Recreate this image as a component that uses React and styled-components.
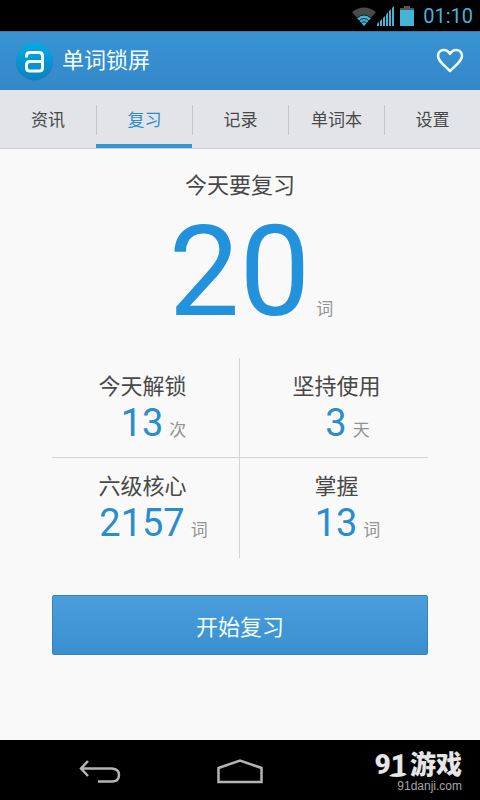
import React, { useState } from 'react';
import styled, { createGlobalStyle, ThemeProvider } from 'styled-components';

const theme = {
  blue: '#2192db',
  statBlue: '#2a8dcb',
  holo: '#45b3d8',
  text: '#484848',
  muted: '#929292',
  line: '#d3d3d3',
};

const tabs = ['资讯', '复习', '记录', '单词本', '设置'];

const stats = [
  { label: '今天解锁', value: 13, unit: '次' },
  { label: '坚持使用', value: 3, unit: '天' },
  { label: '六级核心', value: 2157, unit: '词' },
  { label: '掌握', value: 13, unit: '词' },
];

const GlobalStyle = createGlobalStyle`
  * {
    box-sizing: border-box;
  }

  body {
    margin: 0;
    background: #f9f9f9;
    font-family: Roboto, 'Noto Sans CJK SC', sans-serif;
  }

  button {
    font-family: inherit;
    cursor: pointer;
  }
`;

const Screen = styled.div`
  display: flex;
  flex-direction: column;
  min-height: 100vh;
  color: ${props => props.theme.text};
`;

const StatusBar = styled.div`
  display: flex;
  justify-content: flex-end;
  align-items: center;
  height: 31px;
  padding: 0 7px;
  background: #000;
  color: ${props => props.theme.holo};
`;

const Clock = styled.time`
  margin-left: 8px;
  font-size: 20px;
  line-height: 32px;
`;

const Header = styled.header`
  display: flex;
  align-items: center;
  height: 59px;
  padding: 0 16px;
  border-top: 1px solid #3b79a8;
  background: linear-gradient(#3a93d4, #3388c8);
  color: #f2ffff;
`;

const Title = styled.h1`
  flex: 1;
  margin: 0 0 0 9px;
  font-size: 22px;
  font-weight: 400;
  line-height: 32px;
`;

const IconButton = styled.button`
  display: flex;
  padding: 0;
  border: 0;
  background: none;
  color: inherit;
`;

const TabBar = styled.nav`
  display: flex;
  height: 59px;
  border-bottom: 1px solid #cdcfd2;
  background: #e2e4e8;
`;

const Tab = styled.button`
  display: flex;
  flex: 1;
  align-items: center;
  padding: 6px 0 0;
  border: 0;
  border-bottom: 4px solid ${props => (props.$active ? '#3796d2' : 'transparent')};
  background: none;
  color: ${props => (props.$active ? props.theme.statBlue : props.theme.text)};
  font-size: 17px;

  span {
    flex: 1;
    line-height: 30px;
  }

  &:not(:first-child) span {
    border-left: 1px solid #c4c6c9;
  }
`;

const Main = styled.main`
  display: flex;
  flex: 1;
  flex-direction: column;
  padding: 21px 52px 0;
`;

const Heading = styled.h2`
  margin: 0;
  font-size: 22px;
  font-weight: 400;
  line-height: 32px;
  text-align: center;
`;

const Total = styled.p`
  margin: 0;
  padding-left: 22px;
  color: ${props => props.theme.blue};
  font-size: 126px;
  line-height: 140px;
  text-align: center;
`;

const Unit = styled.span`
  margin-left: 6px;
  color: ${props => props.theme.muted};
  font-size: 17px;
  line-height: 20px;
`;

const Stats = styled.section`
  display: grid;
  grid-template-columns: 1fr 1fr;
  margin-top: 16px;
`;

const Stat = styled.div`
  height: 100px;
  padding: 13px 0 0 5px;
  text-align: center;

  &:nth-child(odd) {
    padding: 13px 6px 0 0;
    border-right: 1px solid ${props => props.theme.line};
  }

  &:nth-child(-n + 2) {
    border-bottom: 1px solid ${props => props.theme.line};
  }
`;

const StatLabel = styled.div`
  font-size: 22px;
  line-height: 32px;
`;

const StatValue = styled.div`
  padding-left: 22px;
  color: ${props => props.theme.statBlue};
  font-size: 38px;
  line-height: 40px;
`;

const StartButton = styled.button`
  height: 60px;
  margin: 37px 0 40px;
  border: 1px solid #3c80b5;
  border-radius: 2px;
  background: linear-gradient(#4a9edc, #3a8fd0);
  color: #f0ffff;
  font-size: 22px;
`;

const NavBar = styled.footer`
  position: relative;
  display: grid;
  grid-template-columns: repeat(3, 1fr);
  justify-items: center;
  align-items: center;
  height: 60px;
  padding: 4px 30px 0;
  background: #000;
  color: #b4b4b4;
`;

const Watermark = styled.div`
  position: absolute;
  top: 11px;
  right: 18px;
  display: flex;
  flex-direction: column;
  align-items: flex-end;
  color: #e6e6e6;
`;

const Brand = styled.div`
  position: relative;
  display: flex;
  align-items: center;
  gap: 3px;
  height: 28px;
  font-size: 26px;
  font-weight: 900;
  line-height: 28px;

  b {
    font-size: 28px;
    font-weight: 900;
  }

  svg {
    position: absolute;
    left: 14px;
    bottom: 2px;
  }
`;

const Site = styled.div`
  color: #a5a5a5;
  font-family: 'Liberation Sans', Arial, sans-serif;
  font-size: 12px;
  line-height: 14px;
`;

const Wifi = () => (
  <svg width="26" height="20" viewBox="0 0 26 20">
    <path d="M1 6Q13-3 25 6L13 20Z" fill="#4b4b4b" />
    <path d="M6 12Q13 6 20 12L13 20Z" fill="#45b3d8" />
    <path d="M6 12Q13 6 20 12M8 15Q13 10 18 15M10 17.500Q13 14 16 17.500" fill="none" stroke="#10262e" />
  </svg>
);

const Signal = () => (
  <svg width="18" height="20" viewBox="0 0 18 20" fill="#45b3d8">
    <path d="M0 20v-2l2-2v4zM3 20v-5l2-2v7zM6 20v-8l2-2v10zM9 20V9l2-3v14zM12 20V5l2-2v17zM15 20V2l2-2v20z" />
  </svg>
);

const Battery = () => (
  <svg width="20" height="20" viewBox="0 0 20 20">
    <path d="M9 0h6v2h4v3H5V2h4z" fill="#565656" />
    <path d="M5 4h14v16H5z" fill="#45b3d8" />
  </svg>
);

const Logo = () => (
  <svg width="37" height="39" viewBox="0 0 37 39">
    <defs>
      <linearGradient id="logo" x1="0" y1="0" x2="0" y2="1">
        <stop offset="0" stopColor="#08a9e2" />
        <stop offset="1" stopColor="#0783c4" />
      </linearGradient>
    </defs>
    <circle cx="18.500" cy="20" r="18.500" fill="#2b78ad" />
    <circle cx="18.500" cy="19" r="18.500" fill="url(#logo)" />
    <path
      d="M10.500 15.500v-1.500q0-3.500 3.500-3.500h9q3.500 0 3.500 3.500v12q0 3-3.500 3h-9q-3.500 0-3.500-3v-3q0-3.500 3.500-3.500h12"
      fill="none"
      stroke="#f4ffff"
      strokeWidth="3"
    />
  </svg>
);

const Heart = () => (
  <svg width="28" height="26" viewBox="0 0 28 26" fill="none" stroke="currentColor" strokeWidth="2.500" strokeLinejoin="round">
    <path d="M14 6C12 2.500 9.500 2 8 2C4.500 2 2 4.500 2 8C2 13 8 17 14 23C20 17 26 13 26 8C26 4.500 23.500 2 20 2C18.500 2 16 2.500 14 6Z" />
  </svg>
);

const Back = () => (
  <svg width="44" height="24" viewBox="0 0 44 24" fill="none" stroke="currentColor" strokeWidth="2.500">
    <path d="M10 1L3 8.500L10 16M3 8.500H34Q41 9 41 15Q41 21.500 34 21.500H20" />
  </svg>
);

const Home = () => (
  <svg width="46" height="26" viewBox="0 0 46 26" fill="none" stroke="currentColor" strokeWidth="2.500">
    <path d="M1.500 9L23 1.500L44.500 9V23H1.500Z" />
  </svg>
);

const Swoosh = () => (
  <svg width="18" height="6" viewBox="0 0 18 6" fill="currentColor">
    <path d="M0 5Q3 2 9 2Q14 1 18 3Q15 6 8 6Q3 6 0 5Z" />
  </svg>
);

const App = () => {
  const [active, setActive] = useState('复习');

  return (
    <ThemeProvider theme={theme}>
      <GlobalStyle />
      <Screen>
        <StatusBar>
          <Wifi />
          <Signal />
          <Battery />
          <Clock>01:10</Clock>
        </StatusBar>
        <Header>
          <Logo />
          <Title>单词锁屏</Title>
          <IconButton aria-label="收藏">
            <Heart />
          </IconButton>
        </Header>
        <TabBar>
          {tabs.map(tab => (
            <Tab key={tab} $active={tab === active} onClick={() => setActive(tab)}>
              <span>{tab}</span>
            </Tab>
          ))}
        </TabBar>
        <Main>
          <Heading>今天要复习</Heading>
          <Total>
            20<Unit>词</Unit>
          </Total>
          <Stats>
            {stats.map(({ label, value, unit }) => (
              <Stat key={label}>
                <StatLabel>{label}</StatLabel>
                <StatValue>
                  {value}
                  <Unit>{unit}</Unit>
                </StatValue>
              </Stat>
            ))}
          </Stats>
          <StartButton>开始复习</StartButton>
        </Main>
        <NavBar>
          <IconButton aria-label="返回">
            <Back />
          </IconButton>
          <IconButton aria-label="主页">
            <Home />
          </IconButton>
          <Watermark>
            <Brand>
              <b>91</b>
              <Swoosh />
              游戏
            </Brand>
            <Site>91danji.com</Site>
          </Watermark>
        </NavBar>
      </Screen>
    </ThemeProvider>
  );
};

export default App;
